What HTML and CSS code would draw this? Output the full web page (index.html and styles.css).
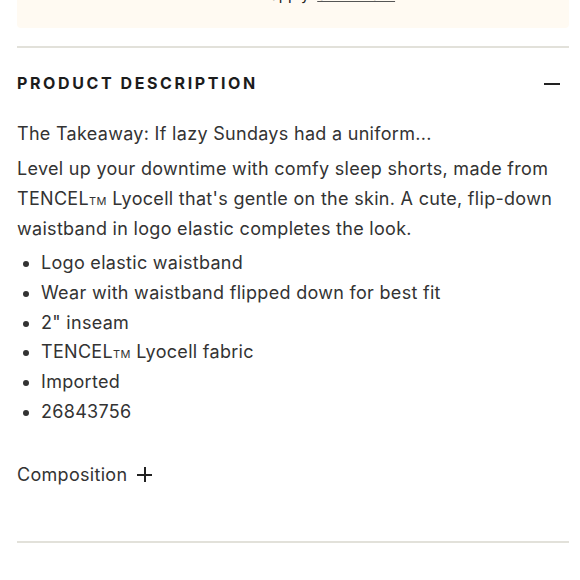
FILE: index.html
```html
<!DOCTYPE html>
<html>
<head>
<meta charset="utf-8">
<link rel="stylesheet" href="styles.css">
</head>
<body>
<div class="page">
  <div class="promo"><span class="promo-text">Exclusions apply. <a class="promo-link">See details</a></span></div>
  <hr class="rule">
  <section class="accordion">
    <div class="acc-head">
      <h2 class="acc-title">PRODUCT DESCRIPTION</h2>
      <span class="minus"></span>
    </div>
    <div class="acc-body">
      <p class="lead">The Takeaway: If lazy Sundays had a uniform...</p>
      <p class="para">Level up your downtime with comfy sleep shorts, made from TENCEL<span class="tm">TM</span> Lyocell that's gentle on the skin. A cute, flip-down waistband in logo elastic completes the look.</p>
      <ul class="bullets">
        <li>Logo elastic waistband</li>
        <li>Wear with waistband flipped down for best fit</li>
        <li>2" inseam</li>
        <li>TENCEL<span class="tm">TM</span> Lyocell fabric</li>
        <li>Imported</li>
        <li>26843756</li>
      </ul>
      <div class="composition">Composition <span class="plus"></span></div>
    </div>
  </section>
  <hr class="rule bottom">
</div>
</body>
</html>
```
FILE: styles.css
```css
html, body { margin: 0; padding: 0; background: #fff; }
body { font-family: "Inter", "Liberation Sans", sans-serif; color: #333; }
.page { padding: 0 11px 0 17px; }
.promo {
  background: #fffaf2;
  height: 50px;
  margin-top: -22px;
  border-radius: 0 0 4px 4px;
  text-align: center;
  font-size: 15px;
  line-height: 18px;
  color: #222;
}
.promo-text { display: inline-block; padding-top: 8px; }
.promo-link { text-decoration: underline; color: #555; }
.rule { border: 0; height: 2px; background: #e2e1da; margin: 18px 0 0 0; }
.acc-head { display: flex; align-items: center; justify-content: space-between; height: 71px; }
.acc-title { margin: 0 0 2px 0; font-size: 16px; font-weight: 700; letter-spacing: 2.6px; color: #1c1c1c; }
.minus { width: 16px; height: 2px; background: #222; margin-right: 9px; }
.acc-body { font-size: 18px; line-height: 30px; letter-spacing: 0.3px; color: #333; }
.lead { margin: 0 0 5px 0; }
.para { margin: 0; }
.tm { font-size: 11px; letter-spacing: 0.5px; line-height: 1; }
.bullets { margin: 4px 0 0 0; padding: 0 0 0 24px; }
.bullets li { line-height: 29.8px; }
.composition { display: flex; align-items: center; margin-top: 33px; height: 30px; }
.plus { position: relative; width: 15px; height: 15px; margin-left: 10px; }
.plus::before, .plus::after { content: ""; position: absolute; background: #222; }
.plus::before { left: 0; right: 0; top: 6.5px; height: 2px; }
.plus::after { top: 0; bottom: 0; left: 6.5px; width: 2px; }
.rule.bottom { margin-top: 51px; }
```
